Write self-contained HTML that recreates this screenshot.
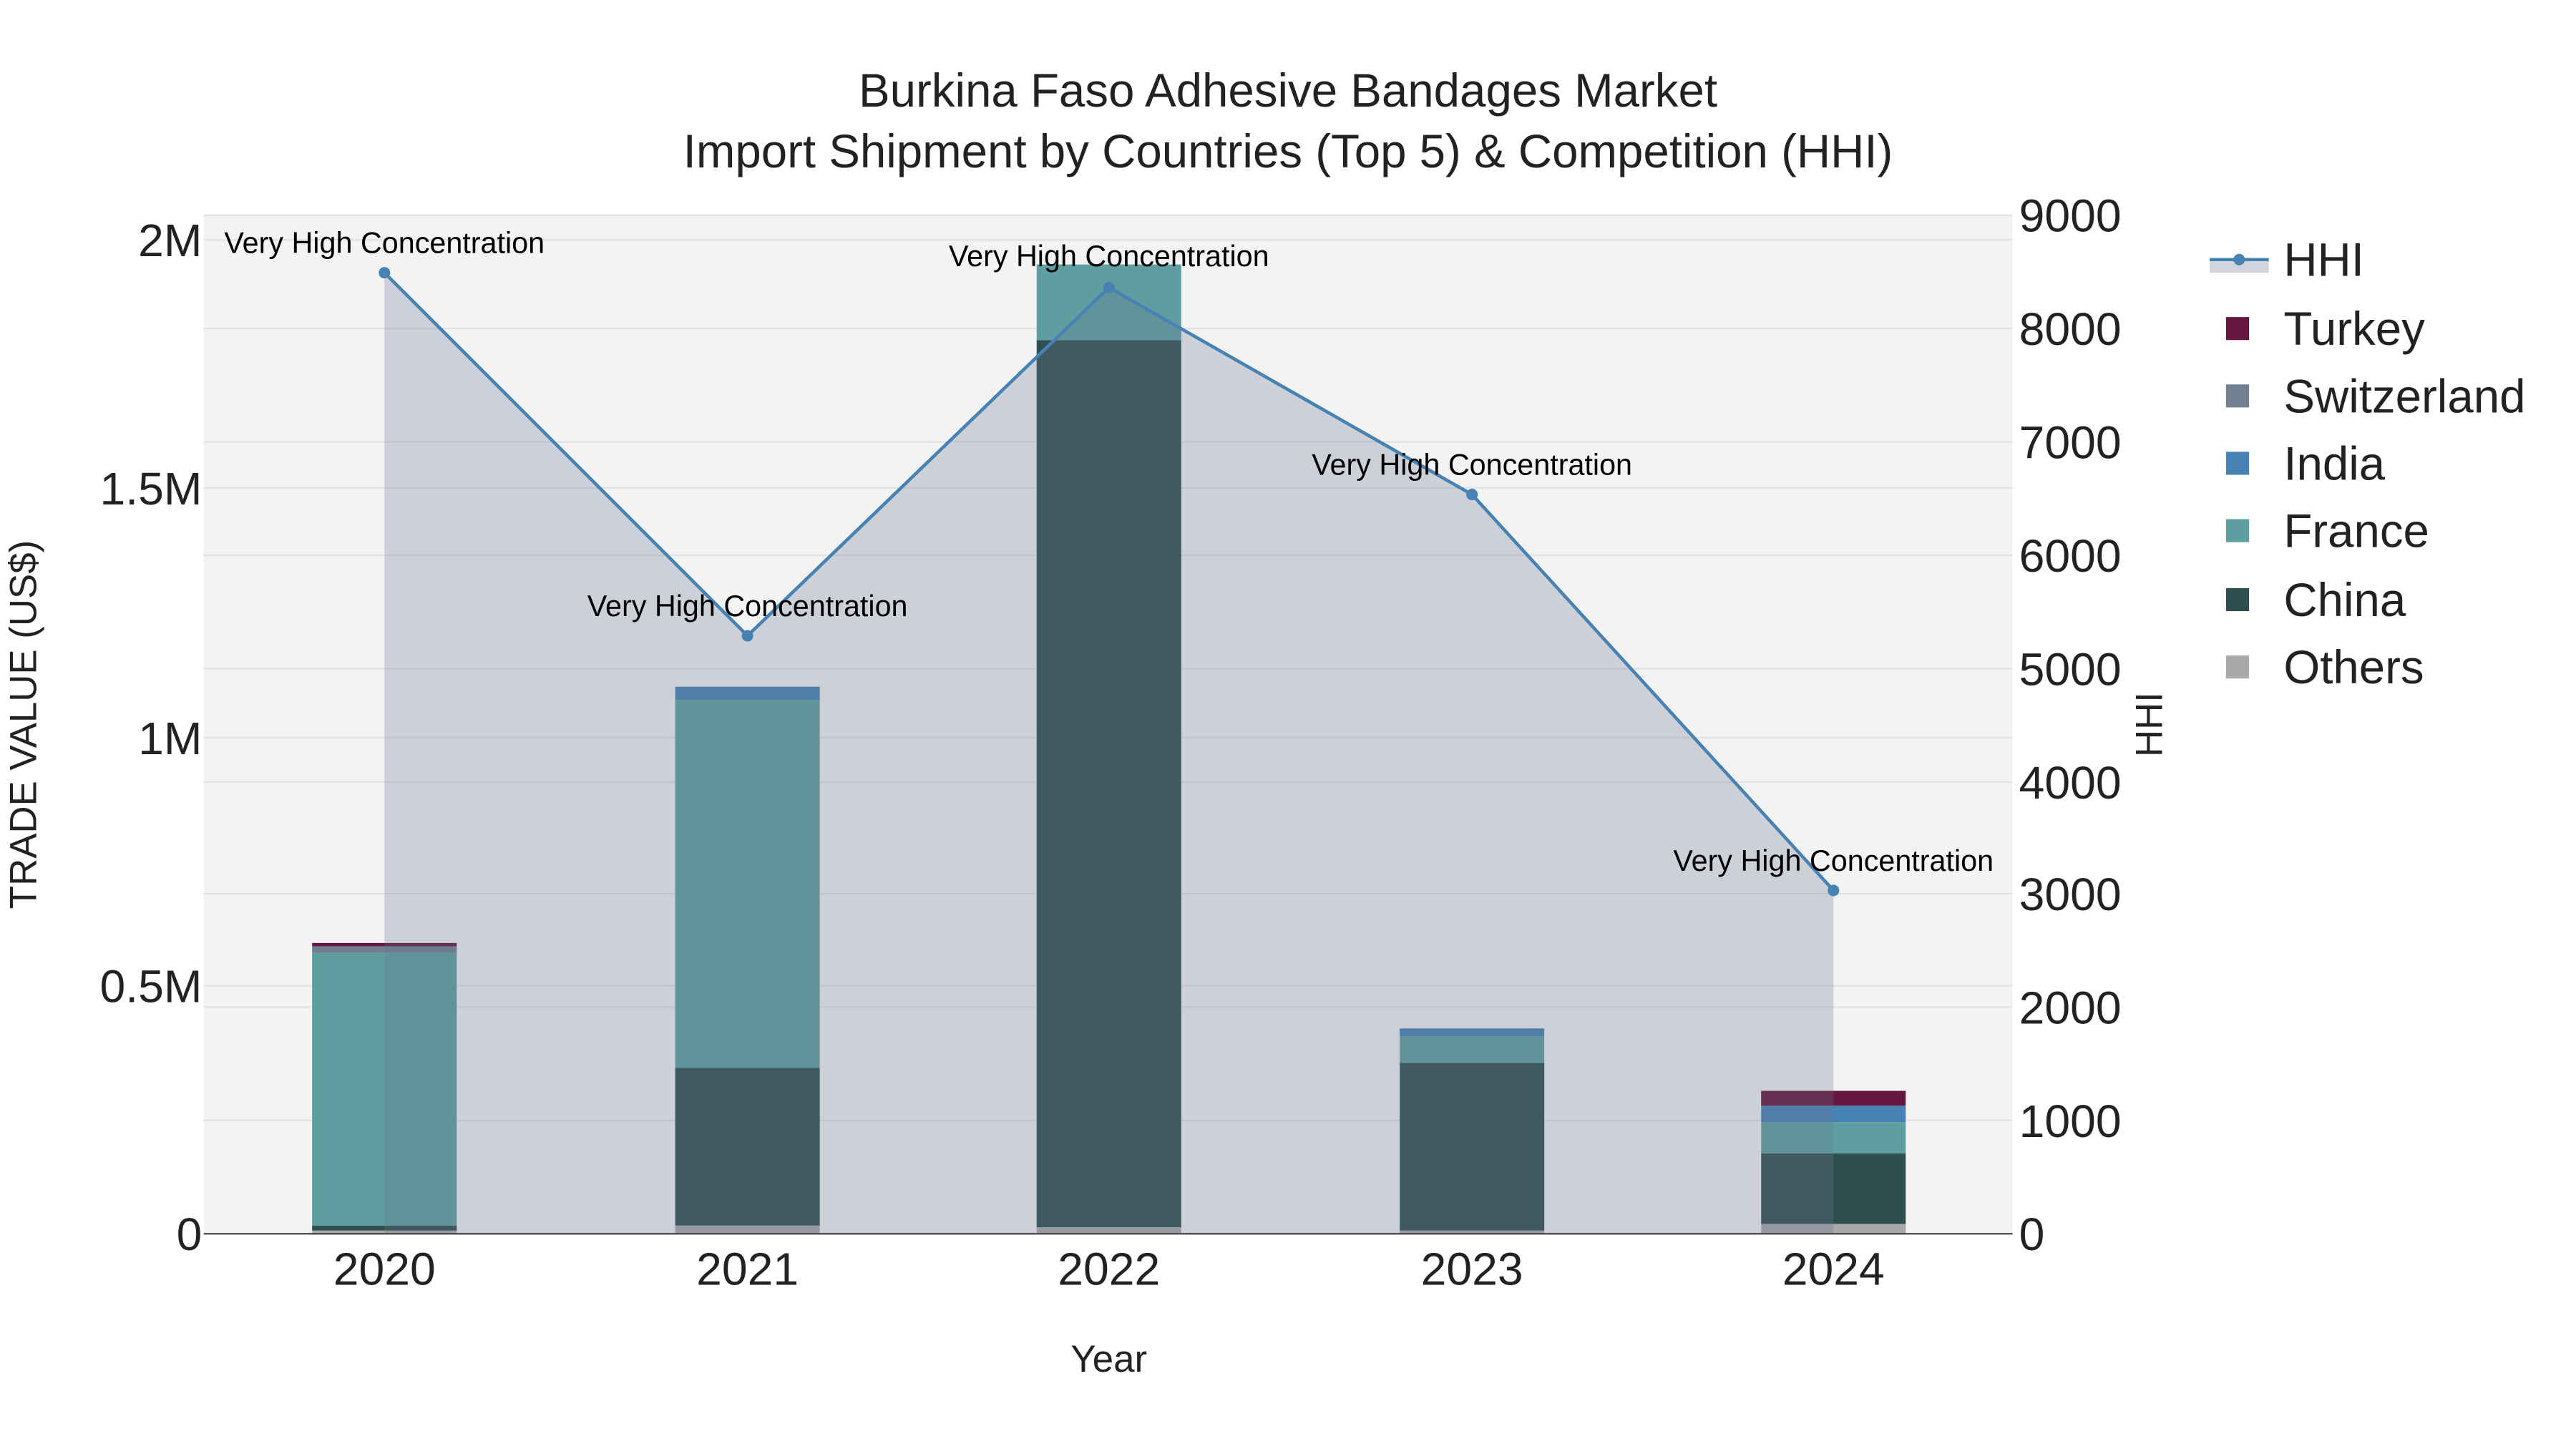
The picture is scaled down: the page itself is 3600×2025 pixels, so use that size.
<!DOCTYPE html>
<html><head><meta charset="utf-8"><style>html,body{margin:0;padding:0;background:#fff}svg{display:block}</style></head><body>
<svg width="3600" height="2025" viewBox="0 0 1568 882" preserveAspectRatio="none" font-family="Liberation Sans, sans-serif">
<rect width="1568" height="882" fill="#fff"/>
<rect x="124" y="131" width="1101" height="620" fill="#f3f3f3"/>
<g stroke="#e2e2e2" stroke-width="1">
<line x1="124" x2="1225" y1="146" y2="146"/><line x1="124" x2="1225" y1="297" y2="297"/><line x1="124" x2="1225" y1="449" y2="449"/><line x1="124" x2="1225" y1="600" y2="600"/>
<line x1="124" x2="1225" y1="131" y2="131"/><line x1="124" x2="1225" y1="200" y2="200"/><line x1="124" x2="1225" y1="269" y2="269"/><line x1="124" x2="1225" y1="338" y2="338"/><line x1="124" x2="1225" y1="407" y2="407"/><line x1="124" x2="1225" y1="476" y2="476"/><line x1="124" x2="1225" y1="544" y2="544"/><line x1="124" x2="1225" y1="613" y2="613"/><line x1="124" x2="1225" y1="682" y2="682"/>
</g>
<g>
<rect x="190" y="746" width="88" height="5" fill="#a9a9a9"/><rect x="190" y="746" width="88" height="3" fill="#2f4f4f"/><rect x="190" y="580" width="88" height="166" fill="#5f9ea0"/><rect x="190" y="576" width="88" height="4" fill="#708090"/><rect x="190" y="574" width="88" height="2" fill="#65173f"/>
<rect x="411" y="746" width="88" height="5" fill="#a9a9a9"/><rect x="411" y="650" width="88" height="96" fill="#2f4f4f"/><rect x="411" y="426" width="88" height="224" fill="#5f9ea0"/><rect x="411" y="418" width="88" height="8" fill="#4682b4"/>
<rect x="631" y="747" width="88" height="4" fill="#a9a9a9"/><rect x="631" y="207" width="88" height="540" fill="#2f4f4f"/><rect x="631" y="161" width="88" height="46" fill="#5f9ea0"/>
<rect x="852" y="749" width="88" height="2" fill="#a9a9a9"/><rect x="852" y="647" width="88" height="102" fill="#2f4f4f"/><rect x="852" y="631" width="88" height="16" fill="#5f9ea0"/><rect x="852" y="626" width="88" height="5" fill="#4682b4"/>
<rect x="1072" y="745" width="88" height="6" fill="#a9a9a9"/><rect x="1072" y="702" width="88" height="43" fill="#2f4f4f"/><rect x="1072" y="683" width="88" height="19" fill="#5f9ea0"/><rect x="1072" y="673" width="88" height="10" fill="#4682b4"/><rect x="1072" y="664" width="88" height="9" fill="#65173f"/>
</g>
<polygon points="234,751 234,166 455,387 675,175 896,301 1116,542 1116,751" fill="rgb(105,118,140)" fill-opacity="0.27"/>
<polyline points="234,166 455,387 675,175 896,301 1116,542" fill="none" stroke="#4682b4" stroke-width="2"/>
<g fill="#4682b4"><circle cx="234" cy="166" r="3.5"/><circle cx="455" cy="387" r="3.5"/><circle cx="675" cy="175" r="3.5"/><circle cx="896" cy="301" r="3.5"/><circle cx="1116" cy="542" r="3.5"/></g>
<line x1="124" x2="1225" y1="751" y2="751" stroke="#444" stroke-width="1"/>
<g font-size="18" fill="#000" text-anchor="middle">
<text x="234" y="154">Very High Concentration</text><text x="455" y="375">Very High Concentration</text><text x="675" y="162">Very High Concentration</text><text x="896" y="289">Very High Concentration</text><text x="1116" y="530">Very High Concentration</text>
</g>
<g font-size="28.5" fill="#222" text-anchor="middle">
<text x="784" y="65">Burkina Faso Adhesive Bandages Market</text>
<text x="784" y="102">Import Shipment by Countries (Top 5) &amp; Competition (HHI)</text>
</g>
<g font-size="28" fill="#222" text-anchor="end">
<text x="123" y="156">2M</text><text x="123" y="307">1.5M</text><text x="123" y="459">1M</text><text x="123" y="610">0.5M</text><text x="123" y="761">0</text>
</g>
<g font-size="28" fill="#222" text-anchor="start">
<text x="1229" y="141">9000</text><text x="1229" y="210">8000</text><text x="1229" y="279">7000</text><text x="1229" y="348">6000</text><text x="1229" y="417">5000</text><text x="1229" y="486">4000</text><text x="1229" y="554">3000</text><text x="1229" y="623">2000</text><text x="1229" y="692">1000</text><text x="1229" y="761">0</text>
</g>
<g font-size="28" fill="#222" text-anchor="middle">
<text x="234" y="782">2020</text><text x="455" y="782">2021</text><text x="675" y="782">2022</text><text x="896" y="782">2023</text><text x="1116" y="782">2024</text>
</g>
<text x="675" y="835" font-size="23" fill="#222" text-anchor="middle">Year</text>
<text transform="translate(22,441) rotate(-90)" font-size="23" fill="#222" text-anchor="middle">TRADE VALUE (US$)</text>
<text transform="translate(1316,441) rotate(-90)" font-size="23" fill="#222" text-anchor="middle">HHI</text>
<rect x="1345" y="158" width="36" height="8" fill="rgb(105,118,140)" fill-opacity="0.3"/>
<line x1="1345" x2="1381" y1="158" y2="158" stroke="#4682b4" stroke-width="2"/><circle cx="1363" cy="158" r="3.5" fill="#4682b4"/>
<g font-size="28.5" fill="#222">
<text x="1390" y="168">HHI</text><text x="1390" y="210">Turkey</text><text x="1390" y="251">Switzerland</text><text x="1390" y="292">India</text><text x="1390" y="333">France</text><text x="1390" y="375">China</text><text x="1390" y="416">Others</text>
</g>
<rect x="1355" y="193" width="14" height="14" fill="#65173f"/>
<rect x="1355" y="234" width="14" height="14" fill="#708090"/>
<rect x="1355" y="275" width="14" height="14" fill="#4682b4"/>
<rect x="1355" y="316" width="14" height="14" fill="#5f9ea0"/>
<rect x="1355" y="358" width="14" height="14" fill="#2f4f4f"/>
<rect x="1355" y="399" width="14" height="14" fill="#a9a9a9"/>
</svg>
</body></html>
